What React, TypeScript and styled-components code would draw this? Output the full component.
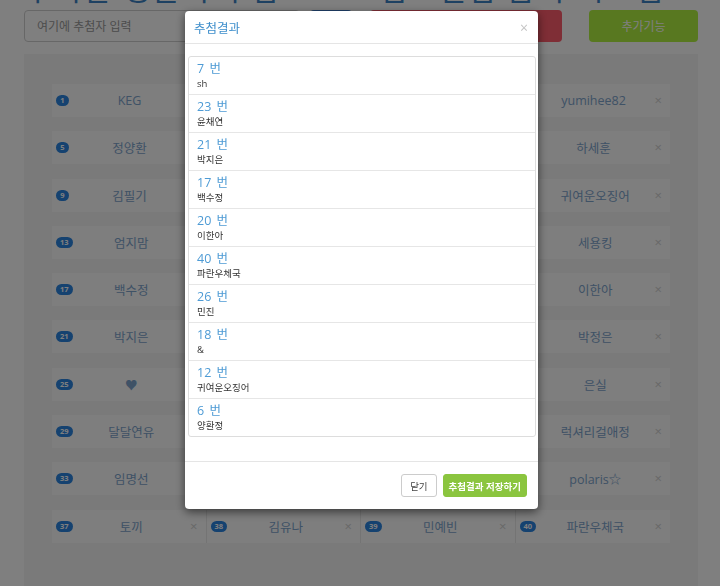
import styled, { createGlobalStyle } from "styled-components";

const GlobalStyle = createGlobalStyle`
  html, body {
    margin: 0;
    padding: 0;
    height: 100%;
    overflow: hidden;
    background: #ffffff;
    font-family: "Open Sans", "Noto Sans CJK KR", sans-serif;
  }
`;

const Page = styled.div`
  padding: 0 22px 0 24px;
  height: 586px;
  overflow: hidden;
`;

const Heading = styled.h1`
  margin: -25px 0 7px 0;
  font-size: 30px;
  line-height: 28px;
  font-weight: 400;
  color: #3c82c4;
  white-space: nowrap;
  letter-spacing: 2px;
`;

const Toolbar = styled.div`
  display: flex;
  align-items: stretch;
  height: 32px;
`;

const Input = styled.input`
  flex: 1;
  box-sizing: border-box;
  border: 1px solid #cfcfcf;
  border-radius: 4px;
  padding: 0 12px;
  font-family: inherit;
  font-size: 12px;
  color: #999;
  background: #fff;
  &::placeholder {
    color: #9a9a9a;
  }
`;

const ToolButton = styled.button<{ $bg: string; $w: number; $ml: number }>`
  width: ${(p) => p.$w}px;
  margin-left: ${(p) => p.$ml}px;
  border: 0;
  border-radius: 4px;
  background: ${(p) => p.$bg};
  color: #fff;
  font-family: inherit;
  font-size: 12px;
`;

const Panel = styled.div`
  margin-top: 12px;
  background: #f4f4f4;
  padding: 30px 28px 60px;
  height: 600px;
  box-sizing: border-box;
`;

const Grid = styled.div`
  display: grid;
  grid-template-columns: repeat(4, 1fr);
  row-gap: 14.3px;
`;

const Cell = styled.div<{ $last: boolean }>`
  height: 33px;
  display: flex;
  align-items: center;
  background: #fcfcfc;
  padding: 0 8px 0 4px;
  border-right: ${(p) => (p.$last ? "0" : "1px solid #e8e8e8")};
`;

const Badge = styled.span`
  min-width: 13px;
  height: 11px;
  padding: 0 4px;
  box-sizing: border-box;
  border-radius: 6px;
  background: #2a84e0;
  color: #fff;
  font-size: 7.5px;
  font-weight: 700;
  line-height: 11px;
  text-align: center;
`;

const Name = styled.span`
  flex: 1;
  text-align: center;
  font-size: 12.5px;
  color: #7ea4cc;
`;

const Remove = styled.span`
  font-size: 13px;
  color: #d0d0d0;
  line-height: 1;
`;

const Backdrop = styled.div`
  position: fixed;
  inset: 0;
  background: rgba(0, 0, 0, 0.5);
`;

const Modal = styled.div`
  width: 353px;
  margin: 11px 0 0 185px;
  background: #fff;
  border-radius: 4px;
  box-shadow: 0 3px 10px rgba(0, 0, 0, 0.55);
  overflow: hidden;
`;

const ModalHeader = styled.div`
  height: 32px;
  display: flex;
  align-items: center;
  justify-content: space-between;
  padding: 0 9px 0 9px;
  border-bottom: 1px solid #e5e5e5;
`;

const ModalTitle = styled.span`
  font-size: 12.5px;
  color: #3f8fcc;
`;

const Close = styled.span`
  font-size: 14px;
  color: #c4c4c4;
  margin-right: 1px;
`;

const ModalBody = styled.div`
  padding: 12px 2px 24px 3px;
`;

const List = styled.div`
  border: 1px solid #dddddd;
  border-radius: 3px;
`;

const Item = styled.div`
  height: 38px;
  padding: 4px 8px 0;
  box-sizing: border-box;
  border-top: 1px solid #e6e6e6;
  &:first-child {
    border-top: 0;
    height: 37px;
  }
`;

const Number = styled.div`
  font-size: 12.5px;
  line-height: 16px;
  color: #4e9bd5;
  word-spacing: 2px;
`;

const Winner = styled.div`
  font-size: 9.5px;
  line-height: 13px;
  color: #333;
`;

const ModalFooter = styled.div`
  display: flex;
  justify-content: flex-end;
  gap: 6px;
  padding: 12px 11px 12px;
  border-top: 1px solid #e5e5e5;
`;

const FooterButton = styled.button<{ $primary?: boolean }>`
  height: 23px;
  padding: 0 ${(p) => (p.$primary ? 5 : 8)}px;
  border-radius: 3px;
  border: 1px solid ${(p) => (p.$primary ? "#8bc53f" : "#cccccc")};
  background: ${(p) => (p.$primary ? "#8bc53f" : "#ffffff")};
  color: ${(p) => (p.$primary ? "#ffffff" : "#444")};
  font-family: inherit;
  font-size: 9.5px;
  font-weight: ${(p) => (p.$primary ? 700 : 400)};
`;

const names = [
  "KEG", "이수진", "김하늘", "yumihee82",
  "정양환", "양환정", "sh", "하세훈",
  "김필기", "최민서", "오은영", "귀여운오징어",
  "엄지맘", "이다은", "한지수", "세용킹",
  "백수정", "&", "송미래", "이한아",
  "박지은", "조은비", "윤채연", "박정은",
  "♥", "민진", "장서윤", "은실",
  "달달연유", "강하은", "문지혜", "럭셔리걸애정",
  "임명선", "신예린", "홍다인", "polaris☆",
  "토끼", "김유나", "민예빈", "파란우체국",
];

const results: [number, string][] = [
  [7, "sh"],
  [23, "윤채연"],
  [21, "박지은"],
  [17, "백수정"],
  [20, "이한아"],
  [40, "파란우체국"],
  [26, "민진"],
  [18, "&"],
  [12, "귀여운오징어"],
  [6, "양환정"],
];

const App = () => {
  return (
    <>
      <GlobalStyle />
      <Page>
        <Heading>우리반 행운의 추첨 프로그램 · 랜덤 뽑기 시스템</Heading>
        <Toolbar>
          <Input type="text" placeholder="여기에 추첨자 입력" />
          <ToolButton $bg="#3f7fd0" $w={42} $ml={10}>
            추가
          </ToolButton>
          <ToolButton $bg="#ff5c6c" $w={192} $ml={18}>
            추첨하기
          </ToolButton>
          <ToolButton $bg="#b0f040" $w={109} $ml={27}>
            추가기능
          </ToolButton>
        </Toolbar>
        <Panel>
          <Grid>
            {names.map((n, i) => (
              <Cell key={i} $last={i % 4 === 3}>
                <Badge>{i + 1}</Badge>
                <Name>{n}</Name>
                <Remove>×</Remove>
              </Cell>
            ))}
          </Grid>
        </Panel>
      </Page>
      <Backdrop>
        <Modal>
          <ModalHeader>
            <ModalTitle>추첨결과</ModalTitle>
            <Close>×</Close>
          </ModalHeader>
          <ModalBody>
            <List>
              {results.map(([num, who]) => (
                <Item key={num}>
                  <Number>{num} 번</Number>
                  <Winner>{who}</Winner>
                </Item>
              ))}
            </List>
          </ModalBody>
          <ModalFooter>
            <FooterButton>닫기</FooterButton>
            <FooterButton $primary>추첨결과 저장하기</FooterButton>
          </ModalFooter>
        </Modal>
      </Backdrop>
    </>
  );
};

export default App;
